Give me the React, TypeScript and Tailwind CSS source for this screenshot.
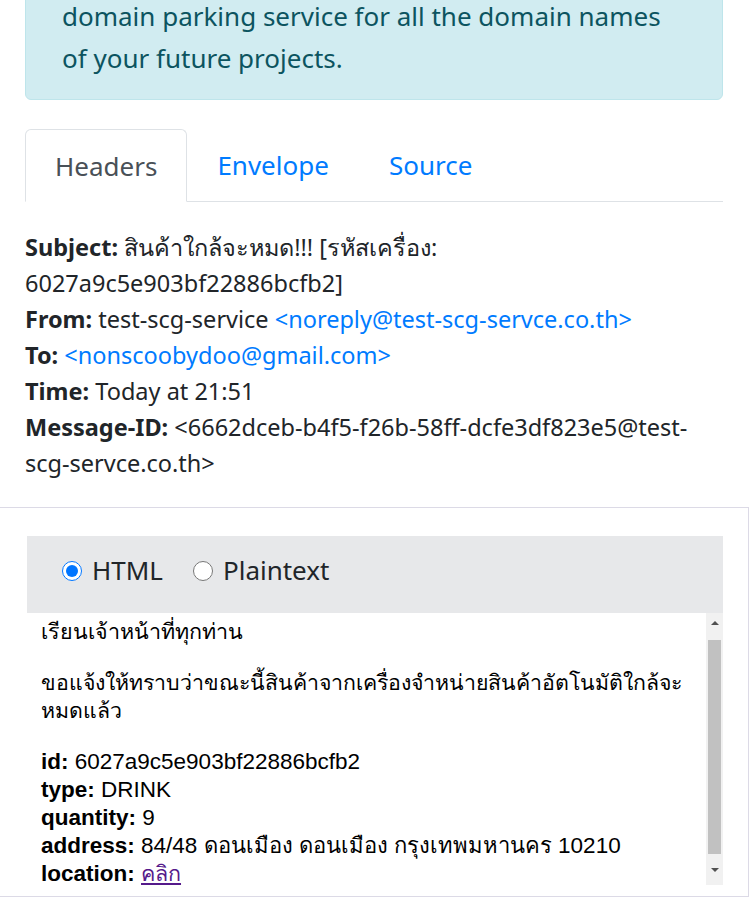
import React from 'react';

const sans = { fontFamily: '"Noto Sans", "Open Sans", sans-serif' };

function HeaderRow({ label, children }: { label: string; children: React.ReactNode }) {
  return (
    <div>
      <span className="font-bold">{label}</span> {children}
    </div>
  );
}

function Scrollbar() {
  return (
    <div className="w-[17px] shrink-0 bg-[#f1f1f1] flex flex-col items-center">
      <div className="h-[20px] flex items-center justify-center">
        <span className="block w-0 h-0 border-l-[4px] border-r-[4px] border-b-[4px] border-l-transparent border-r-transparent border-b-[#505050]" />
      </div>
      <div className="w-[13px] h-[214px] mt-[7px] bg-[#c1c1c1]" />
      <div className="flex-1 flex items-center justify-center">
        <span className="block w-0 h-0 border-l-[4px] border-r-[4px] border-t-[4px] border-l-transparent border-r-transparent border-t-[#505050]" />
      </div>
    </div>
  );
}

export default function App() {
  return (
    <div className="w-[750px] h-[922px] overflow-hidden bg-white text-[#212529]" style={sans}>
      <div className="ml-[25px] w-[698px]">
        {/* info alert, scrolled partly out of view */}
        <div className="-mt-[26px] bg-[#d1ecf1] border border-[#bee5eb] rounded-md text-[#0c5460] text-[26px] leading-[42px] pt-[20px] pb-[20px] pl-[36px] pr-[30px]">
          domain parking service for all the domain names of your future projects.
        </div>

        {/* tabs */}
        <div className="mt-[29px] flex border-b border-[#dee2e6] text-[26px] leading-[39px]">
          <div className="px-[29px] pt-[17px] pb-[15px] border border-[#dee2e6] border-b-white -mb-px rounded-t-md text-[#495057] bg-white">
            Headers
          </div>
          <div className="px-[30px] pt-[17px] pb-[15px] text-[#007bff]">Envelope</div>
          <div className="px-[30px] pt-[17px] pb-[15px] text-[#007bff]">Source</div>
        </div>

        {/* message headers */}
        <div className="mt-[27px] text-[23.5px] leading-[36px]">
          <HeaderRow label="Subject:">สินค้าใกล้จะหมด!!! [รหัสเครื่อง: 6027a9c5e903bf22886bcfb2]</HeaderRow>
          <HeaderRow label="From:">
            test-scg-service <span className="text-[#007bff]">&lt;noreply@test-scg-servce.co.th&gt;</span>
          </HeaderRow>
          <HeaderRow label="To:">
            <span className="text-[#007bff]">&lt;nonscoobydoo@gmail.com&gt;</span>
          </HeaderRow>
          <HeaderRow label="Time:">Today at 21:51</HeaderRow>
          <HeaderRow label="Message-ID:">&lt;6662dceb-b4f5-f26b-58ff-dcfe3df823e5@test-scg-servce.co.th&gt;</HeaderRow>
        </div>
      </div>

      {/* body panel */}
      <div className="mt-[26px] w-[749px] border-t border-r border-b border-[#dcdae6] pt-[28px] pb-[11px] pl-[27px] pr-[25px]">
        <div className="h-[77px] bg-[#e7e8ea] flex items-center pl-[35px] pb-[8px] text-[26px]">
          <label className="flex items-center">
            <input type="radio" name="fmt" defaultChecked className="w-5 h-5 m-0 accent-[#0075ff]" />
            <span className="ml-[10px]">HTML</span>
          </label>
          <label className="flex items-center ml-[30px]">
            <input type="radio" name="fmt" className="w-5 h-5 m-0" />
            <span className="ml-[10px]">Plaintext</span>
          </label>
        </div>

        <div className="flex h-[272px] bg-white">
          <div
            className="flex-1 overflow-hidden pl-[14px] pt-[5px] text-black text-[22.5px] leading-[28px]"
            style={{ fontFamily: '"Liberation Sans", Arial, sans-serif' }}
          >
            <p className="text-[21.5px]">เรียนเจ้าหน้าที่ทุกท่าน</p>
            <p className="mt-[23px] text-[21.3px]">ขอแจ้งให้ทราบว่าขณะนี้สินค้าจากเครื่องจำหน่ายสินค้าอัตโนมัติใกล้จะหมดแล้ว</p>
            <p className="mt-[23px]">
              <b>id:</b> 6027a9c5e903bf22886bcfb2
              <br />
              <b>type:</b> DRINK
              <br />
              <b>quantity:</b> 9
              <br />
              <b>address:</b> 84/48 <span className="text-[22px]">ดอนเมือง ดอนเมือง กรุงเทพมหานคร</span> 10210
              <br />
              <b>location:</b> <a href="#" className="text-[#551a8b] underline text-[21.5px]">คลิก</a>
            </p>
          </div>
          <Scrollbar />
        </div>
      </div>
    </div>
  );
}
